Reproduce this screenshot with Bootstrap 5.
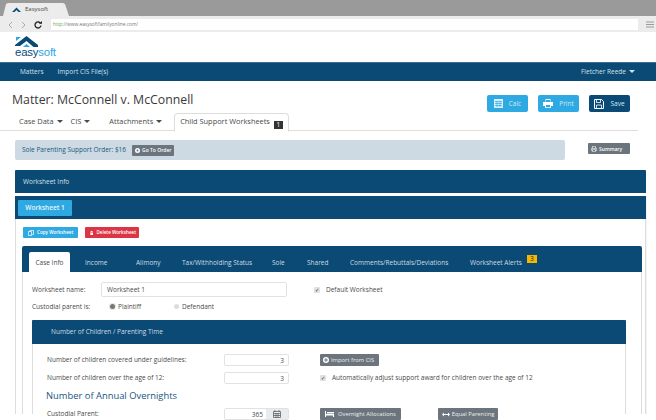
<!DOCTYPE html>
<html><head><meta charset="utf-8"><title>Easysoft</title>
<link href="https://cdn.jsdelivr.net/npm/bootstrap@5.3.0/dist/css/bootstrap.min.css" rel="stylesheet">
<style>
html,body{margin:0;height:420px;overflow:hidden;background:#fff}
body{font-family:"Open Sans","Liberation Sans",sans-serif;font-size:6.5px;line-height:1.2;color:#4a4a4a}
.chrome-top{height:16px;background:#9a9a9a;padding:3px 0 0 3px}
.chrome-tab{width:66px;height:13px;background:#ececec;clip-path:polygon(0 100%,3px 1px,5px 0,60px 0,62px 1px,100% 100%);padding-left:9px;gap:4px;color:#444;font-size:6px}
.chrome-bar{height:16px;background:#ececec;padding:3px 0 2px 8px}
.addr{width:587px;height:11px;background:#fff;margin-left:9px;padding-left:2px;font-size:4.8px;color:#777;flex:none}
.addr b{font-weight:400;color:#6aa84f}
.brand-row{height:30px;padding:4px 0 0 15px}
.logo-txt{font-size:11.4px;line-height:10px;color:#0a4a75;letter-spacing:-.2px;font-family:"Liberation Sans",sans-serif}
.logo-txt span{color:#2fa8e0}
.main-nav{height:19px;background:#0a4a75;border-top:1px solid #3a6f94;color:#d5e0e8;padding:0 21px 0 20px;gap:14px}
.caret-d{display:inline-block;width:0;height:0;border:3px solid transparent;border-top:3px solid currentColor;border-bottom:0;margin-left:3px;vertical-align:1px}
.head-row{padding:0 26px 0 12px;height:32px}
.ttl{font-size:12.300px;color:#3a3a3a;font-weight:400;margin:0;padding-top:12px}
.act-box{gap:10px;padding-top:14px}
.act{height:17px;width:41px;border-radius:2px;color:#cfeaf8;font-size:6.500px;gap:6px;background:#2fa9e2}
.act.dk{background:#0a4a75}
.tabs-row{height:18px;padding-left:19px;border-bottom:1px solid #ddd;margin-right:18px;font-size:7.400px;color:#4a4a4a}
.tb{padding-top:4px}
.m-cis{margin-left:8px}
.m-att{margin-left:19px}
.m-cur{margin-left:12px}
.tb-on{border:1px solid #ddd;border-bottom:1px solid #fff;border-radius:4px 4px 0 0;height:19px;width:115px;padding:3px 0 0 5px;background:#fff;gap:4px;white-space:nowrap}
.num-b{background:#333;color:#fff;font-size:6.500px;width:9px;height:8px;line-height:8px;text-align:center}
.order-row{margin:9px 26px 0 15px;height:20px}
.order-bar{width:550px;height:20px;background:#cddae3;border-radius:2px;padding-left:7px;color:#17577f;gap:6px;font-size:6.500px}
.mini{background:#6c757d;color:#fff;font-size:5px;font-weight:600;height:11px;padding:0 3px;gap:2px;border-radius:1px;white-space:nowrap}
.sum-b{width:42px;margin-top:3px}
.blue-bar{margin:10px 10px 0 15px;height:23px;background:#0a4a75;color:#d5e0e8;padding-left:8px;font-size:6.500px;border-radius:1px 1px 0 0}
.outer{margin:3px 10px 0 15px;height:218px;border-left:1px solid #ddd;border-right:1px solid #ddd;box-shadow:1px 0 0 #f3f3f3}
.ws-head{height:23px;background:#0a4a75;margin:0 -1px;padding:4px 3px}
.ws-pill{width:54px;height:16px;background:#2fa9e2;color:#e6f5fc;border-radius:1px;font-size:6.500px;font-weight:600;white-space:nowrap}
.ws-body{padding:8px 3px 0 6px}
.act-row{gap:7px;margin:0 0 8px 1px}
.small-btn{height:11px;color:#fff;font-size:4.600px;font-weight:600;gap:3px;border-radius:1px;padding:0 3px 0 5px;white-space:nowrap}
.c-blue{background:#2fa9e2;width:55px}.c-red{background:#dc3545;width:54px}
.inner-tabs{height:26px;background:#0a4a75;border-radius:2px 2px 0 0;padding:6px 0 0 7px;color:#cfdbe4;font-size:6.500px}
.itab{white-space:nowrap;padding-top:7px}
.itab-on{background:#fff;color:#4a4a4a;width:41px;height:20px;text-align:center;border-radius:2px 2px 0 0;margin-right:15px}
.tw1{width:51px}.tw2{width:46px}.tw3{width:90px}.tw4{width:35px}.tw5{width:43px}.tw6{width:120px}
.al-b{text-align:center;background:#f5b800;color:#222;width:10px;height:8px;line-height:8px;font-size:6.500px;margin:-4px 0 0 5px}
.inner-body{height:142px;border-left:1px solid #ddd;border-right:1px solid #ddd;padding:10px 15px 0 9px}
.f-row{height:15px;margin-bottom:2px;white-space:nowrap}
.name-lab{width:69px}
.txt-in{width:186px;height:15px;border:1px solid #e2e2e2;border-radius:2px;padding-left:5px;background:#fff;font-size:6.500px}
.chk{width:6px;height:6px;background:#e0e0e0;border-radius:1px;font-size:5px;line-height:6px;text-align:center;color:#222;margin-right:6px;flex:none}
.chk-a{margin-left:27px}
.par-lab{width:78px}
.rad{width:5px;height:5px;border-radius:50%;background:#ddd;margin-right:3px;flex:none}
.rad.on{background:#777;box-shadow:0 0 0 1px #e5e5e5}
.pla{width:56px}
.sect{margin-top:6px;height:94px;border-left:1px solid #ddd;border-right:1px solid #ddd}
.sect-head{height:24px;background:#0a4a75;margin:0 -1px;color:#cfdbe4;padding-left:19px;font-size:6.500px;border-radius:1px 1px 0 0}
.sect-body{padding:10px 0 0 14px}
.s-row{height:12px;margin-bottom:6px;white-space:nowrap}
.s-lab{width:177px}
.num-in{width:65px;height:12px;border:1px solid #e2e2e2;border-radius:2px;text-align:right;padding-right:4px;line-height:11px;flex:none}
.num-cal{display:flex;width:65px;height:12px;border:1px solid #e2e2e2;border-radius:2px;line-height:11px;text-align:right;flex:none}
.num-cal i{font-style:normal;flex:1;padding-right:3px}
.cal-ad{width:22px;background:#e9ecef;flex:none}
.ml31{margin-left:31px}
.h-over{font-size:9.400px;color:#17577f;font-weight:400;margin:0 0 6px -1px;line-height:12px}
.gr-btn{background:#6c757d;color:#eee;height:12px;font-size:5.800px;padding:0 5px;gap:4px;border-radius:1px;white-space:nowrap}
.gr-btn.imp{padding:0 4px 0 3px;gap:2px;width:59px}
.gr-btn.eq-b{margin-left:37px;padding:0 3px 0 4px;gap:2px;width:60px}
</style></head><body>
<div class="chrome-top"><div class="chrome-tab d-flex align-items-center">
<svg width="9" height="5" viewBox="0 0 18 10"><path d="M0 10 9 1l9 9h-5L9 6l-4 4z" fill="#0a4a75"/></svg><span>Easysoft</span></div></div>
<div class="chrome-bar d-flex align-items-center">
<svg width="5" height="8" viewBox="0 0 5 8"><path d="M4 1 1 4l3 3" fill="none" stroke="#aaa"/></svg>
<svg class="ms-2" width="5" height="8" viewBox="0 0 5 8"><path d="M1 1l3 3-3 3" fill="none" stroke="#aaa"/></svg>
<svg class="ms-2" width="8" height="8" viewBox="0 0 8 8"><path d="M6.600 2.400A3 3 0 1 0 7 4.500" fill="none" stroke="#222" stroke-width="1.300"/><path d="M5 2.800h3V0z" fill="#222"/></svg>
<div class="addr d-flex align-items-center"><span><b>http:</b>//www.easysoftfamilyonline.com/</span></div>
<svg class="ms-2" width="8" height="7" viewBox="0 0 8 7"><path d="M0 1h8M0 3.500h8M0 6h8" stroke="#999"/></svg>
</div>
<div class="brand-row">
<svg class="d-block" width="23" height="11" viewBox="0 0 23 11"><path d="M0 9 11.500 0 23 9v2h-4.500L11.500 5 5 10H0z" fill="#0a4a75"/><path d="M1 1h5L1 5z" fill="#2fa8e0"/><path d="M8 11l3.500-3L15 11z" fill="#2fa8e0"/></svg>
<div class="logo-txt">easy<span>soft</span></div>
</div>
<div class="main-nav d-flex align-items-center"><span>Matters</span><span>Import CIS File(s)</span><span class="ms-auto">Fletcher Reede<span class="caret-d"></span></span></div>
<div class="head-row d-flex justify-content-between">
<h1 class="ttl">Matter: McConnell v. McConnell</h1>
<div class="act-box d-flex align-items-start">
<div class="act d-flex align-items-center justify-content-center"><svg width="9" height="9" viewBox="0 0 9 9"><path d="M0 0h9v9H0z" fill="#d8eefa"/><path d="M1 2.500h7M1 4.500h7M1 6.500h7M3 2.500V8M6 2.500V8" stroke="#2fa9e2" stroke-width=".7"/></svg>Calc</div>
<div class="act d-flex align-items-center justify-content-center"><svg width="10" height="9" viewBox="0 0 10 9"><path d="M2.500 0h5v3h-5zM0 3h10v4H8v2H2V7H0z" fill="#fff"/><path d="M3 1h4v2H3zM3 6h4v2.300H3z" fill="#2fa9e2"/></svg>Print</div>
<div class="act dk d-flex align-items-center justify-content-center"><svg width="10" height="10" viewBox="0 0 10 10"><path d="M.500.500h7l2 2v7h-9z" fill="none" stroke="#fff"/><path d="M2.500.500h4v3h-4zM2.500 6h5v3.500h-5z" fill="none" stroke="#fff" stroke-width=".8"/></svg>Save</div>
</div></div>
<div class="tabs-row d-flex">
<div class="tb">Case Data<span class="caret-d"></span></div>
<div class="tb m-cis">CIS<span class="caret-d"></span></div>
<div class="tb m-att">Attachments<span class="caret-d"></span></div>
<div class="tb-on m-cur d-flex"><span>Child Support Worksheets</span><span class="num-b mt-1">1</span></div>
</div>
<div class="order-row d-flex justify-content-between">
<div class="order-bar d-flex align-items-center"><span>Sole Parenting Support Order: $16</span><span class="mini d-flex align-items-center"><svg width="5" height="5" viewBox="0 0 5 5"><circle cx="2.500" cy="2.500" r="2.500" fill="#fff"/><circle cx="2.500" cy="2.500" r="1" fill="#6c757d"/></svg>Go To Order</span></div>
<span class="mini sum-b d-flex align-items-center"><svg width="6" height="6" viewBox="0 0 10 10"><path d="M2.500 4V.500h5V4M2.500 7.500H.500V4h9v3.500h-2M2.500 6h5v3.500h-5z" fill="none" stroke="#fff"/></svg>Summary</span>
</div>
<div class="blue-bar d-flex align-items-center">Worksheet Info</div>
<div class="outer">
<div class="ws-head"><div class="ws-pill d-flex align-items-center justify-content-center">Worksheet 1</div></div>
<div class="ws-body">
<div class="act-row d-flex">
<div class="small-btn c-blue d-flex align-items-center"><svg width="6" height="6" viewBox="0 0 6 6"><path d="M.500 1.500h3v4h-3zM2 1.500v-1h3.500v4H3.500" fill="none" stroke="#fff" stroke-width=".7"/></svg>Copy Worksheet</div>
<div class="small-btn c-red d-flex align-items-center"><svg width="5" height="6" viewBox="0 0 5 6"><path d="M0 1h1.500V.200h2V1H5v1H0zM.500 2.500h4V6h-4z" fill="#fff"/></svg>Delete Worksheet</div>
</div>
<div class="inner-tabs d-flex">
<div class="itab itab-on">Case Info</div>
<div class="itab tw1">Income</div>
<div class="itab tw2">Alimony</div>
<div class="itab tw3">Tax/Withholding Status</div>
<div class="itab tw4">Sole</div>
<div class="itab tw5">Shared</div>
<div class="itab tw6">Comments/Rebuttals/Deviations</div>
<div class="itab d-flex align-items-start"><span>Worksheet Alerts</span><span class="al-b">3</span></div>
</div>
<div class="inner-body">
<div class="f-row d-flex align-items-center">
<span class="name-lab">Worksheet name:</span><div class="txt-in d-flex align-items-center">Worksheet 1</div>
<span class="chk chk-a">&#10003;</span><span>Default Worksheet</span></div>
<div class="f-row d-flex align-items-center">
<span class="par-lab">Custodial parent is:</span><span class="rad on"></span><span class="pla">Plaintiff</span><span class="rad"></span><span>Defendant</span></div>
<div class="sect">
<div class="sect-head d-flex align-items-center">Number of Children / Parenting Time</div>
<div class="sect-body">
<div class="s-row d-flex align-items-center"><span class="s-lab">Number of children covered under guidelines:</span><div class="num-in">3</div><span class="gr-btn imp d-inline-flex align-items-center ml31"><svg width="6" height="6" viewBox="0 0 6 6"><circle cx="3" cy="3" r="3" fill="#fff"/><path d="M3 1.200v3.600M1.200 3h3.600" stroke="#6c757d"/></svg>Import from CIS</span></div>
<div class="s-row d-flex align-items-center"><span class="s-lab">Number of children over the age of 12:</span><div class="num-in">3</div><span class="chk ml31">&#10003;</span><span>Automatically adjust support award for children over the age of 12</span></div>
<h2 class="h-over">Number of Annual Overnights</h2>
<div class="s-row d-flex align-items-center"><span class="s-lab">Custodial Parent:</span><div class="num-cal"><i>365</i><span class="cal-ad d-flex align-items-center justify-content-center"><svg width="8" height="8" viewBox="0 0 8 8"><path d="M.500 1.500h7v6h-7zM.500 3.500h7M2 0v2M6 0v2M3 3.500v4M5 3.500v4M.500 5.500h7" fill="none" stroke="#555" stroke-width=".7"/></svg></span></div>
<span class="gr-btn d-inline-flex align-items-center ml31"><svg width="9" height="6" viewBox="0 0 9 6"><path d="M0 0h1v3h8v3H8V4.500H1V6H0zM2 1h7v1.500H2z" fill="#fff"/></svg>Overnight Allocations</span>
<span class="gr-btn eq-b d-inline-flex align-items-center"><svg width="8" height="5" viewBox="0 0 8 5"><path d="M0 2.500 2 .500V2h4V.500l2 2-2 2V3H2v1.500z" fill="#fff"/></svg>Equal Parenting</span></div>
</div></div>
</div></div></div>
</body></html>
